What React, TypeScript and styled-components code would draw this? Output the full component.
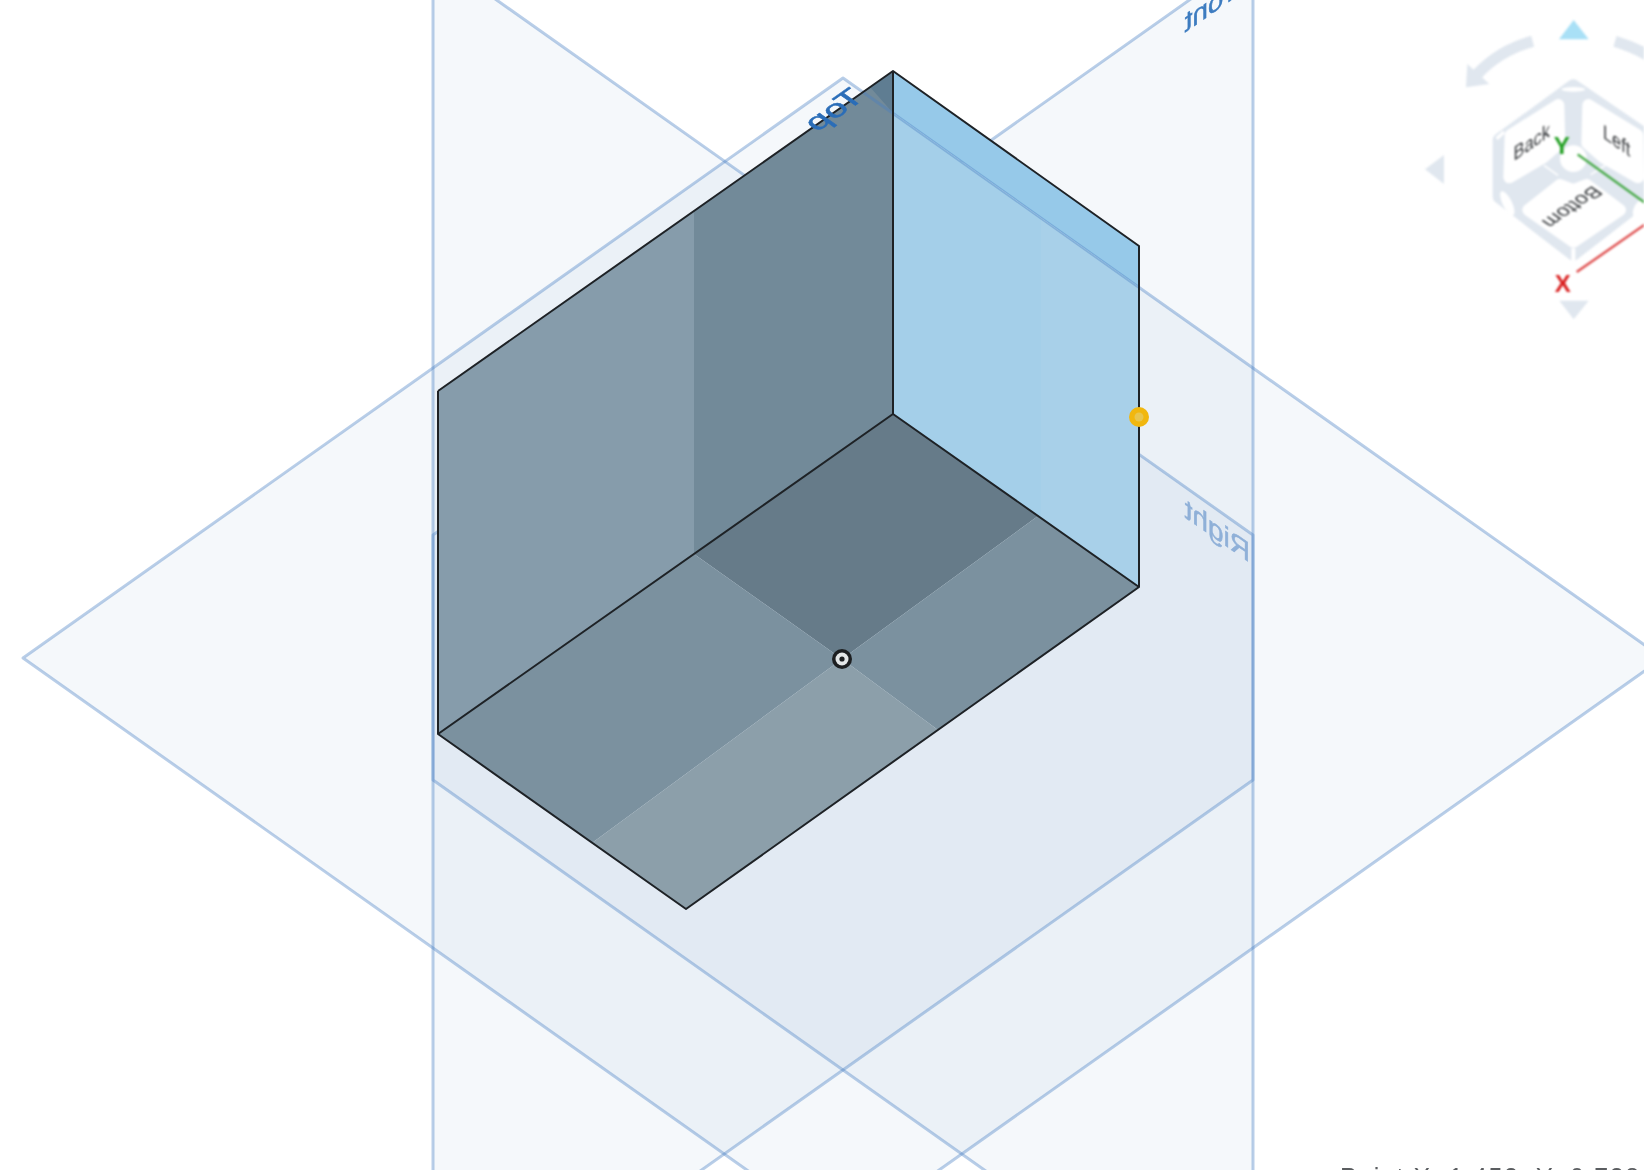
import React from 'react'
import styled, { createGlobalStyle } from 'styled-components'

const PLANE_LINE = 'rgba(70, 125, 195, 0.38)'
const PLANE_FILL = 'rgba(95, 140, 185, 0.062)'

const planeFront = '433,535 1253,-45 1253,780 433,1360'
const planeRight = '433,-45 1253,535 1253,1360 433,780'
const planeTop = '23,658 843,78 1663,658 843,1238'

// box faces, each split where the datum planes cut through it
const faces = [
  { points: '438,391 694,211 694,554 438,734', fill: '#869cab' },
  { points: '694,211 893,71 893,414 694,554', fill: '#728a99' },
  { points: '870,87 893,71 893,113', fill: '#5f7d92' },
  { points: '893,71 1139,246 1139,287 893,113', fill: '#96c9e9' },
  { points: '893,113 1041,218 1041,518 893,414', fill: '#a4cfe9' },
  { points: '1041,218 1139,287 1139,587 1041,518', fill: '#a8d0e9' },
  { points: '694,554 893,414 1038,516 842,659', fill: '#667b89' },
  { points: '438,734 694,554 842,659 592,843', fill: '#7b919f' },
  { points: '1038,516 1139,587 938,730 842,659', fill: '#7b919f' },
  { points: '842,659 938,730 686,909 592,843', fill: '#8c9faa' },
]

const boxEdges = [
  '438,391 893,71 1139,246 1139,587 686,909 438,734 438,391',
  '893,71 893,414',
  '438,734 893,414 1139,587',
]

export default function App() {
  return (
    <>
      <GlobalStyle />
      <Viewport>
        <Scene viewBox="0 0 1644 1170">
          <polygon points={planeFront} fill={PLANE_FILL} />
          <polygon points={planeRight} fill={PLANE_FILL} />
          <polygon points={planeTop} fill={PLANE_FILL} />
          <DatumEdge points={planeFront} />
          <DatumEdge points={planeRight} />

          {faces.map((face) => (
            <polygon key={face.points} points={face.points} fill={face.fill} />
          ))}
          <DatumEdge points={planeTop} />

          {boxEdges.map((edge) => (
            <BoxEdge key={edge} points={edge} />
          ))}

          <PlaneLabel transform="matrix(-1.08 0.76 0.85 0.6 866 98)" $tone="#2a6db8">
            Top
          </PlaneLabel>
          <PlaneLabel transform="matrix(-1 0.7 0 1 1250 -13)" $tone="#3d7cc0">
            Front
          </PlaneLabel>
          <PlaneLabel transform="matrix(-1 -0.7 0 1 1250 563)" $tone="#8fb0d8">
            Right
          </PlaneLabel>

          <circle cx={1139} cy={417} r={10} fill="#f1b70f" />
          <circle cx={1139} cy={417} r={4.5} fill="#e8c64f" />

          <circle cx={842} cy={659} r={10} fill="#1d1f21" />
          <circle cx={842} cy={659} r={6.5} fill="#e4e7e8" />
          <circle cx={842} cy={659} r={2.6} fill="#1d1f21" />
        </Scene>

        <ViewCube viewBox="0 0 732 990">
          <polygon points="521,60 566,118 477,118" fill="#a9e0f6" />
          <polygon points="75,508 132,465 132,552" fill="#e0e7ef" />
          <polygon points="478,902 566,902 521,958" fill="#e0e7ef" />
          <CubeArc d="M398 124 Q300 150 232 222" />
          <polygon points="202,192 198,262 268,252" fill="#e0e7ef" />
          <CubeArc d="M645 124 Q720 146 780 190" />

          <path
            d="M520 258 L742 410 L742 590 L520 762 L298 590 L298 420 Z"
            fill="#e0e7ef"
            stroke="#e0e7ef"
            strokeWidth={40}
            strokeLinejoin="round"
          />
          <CubeFace points="475,315 332,405 328,532 430,472 478,430" />
          <CubeFace points="565,315 712,405 714,532 610,472 562,430" />
          <CubeFace points="385,630 480,555 520,570 560,555 660,630 520,725" />
          <circle cx={520} cy={476} r={40} fill="#fff" />
          <ellipse cx={520} cy={268} rx={36} ry={7} fill="#fff" />
          <ellipse cx={322} cy={610} rx={14} ry={40} fill="#fff" transform="rotate(-26 322 610)" />
          <ellipse cx={716} cy={626} rx={14} ry={28} fill="#fff" transform="rotate(26 716 626)" />
          <line x1={432} y1={496} x2={474} y2={526} stroke="#fff" strokeWidth={5} />
          <line x1={572} y1={524} x2={616} y2={496} stroke="#fff" strokeWidth={5} />
          <line x1={520} y1={745} x2={520} y2={785} stroke="#fff" strokeWidth={12} />
          <line x1={290} y1={416} x2={312} y2={396} stroke="#fff" strokeWidth={10} />

          <CubeLabel transform="matrix(0.82 -0.57 0 1 395 446)">Back</CubeLabel>
          <CubeLabel transform="matrix(0.82 0.57 0 1 650 442)">Left</CubeLabel>
          <CubeLabel transform="matrix(-0.82 0.57 -0.82 -0.57 500 610)">Bottom</CubeLabel>

          <line x1={533} y1={463} x2={740} y2={612} stroke="#3fa63f" strokeWidth={7} />
          <line x1={530} y1={816} x2={740} y2={670} stroke="#de4a4a" strokeWidth={7} />
          <AxisLabel x={485} y={462} fill="#23a023">Y</AxisLabel>
          <AxisLabel x={488} y={877} fill="#d92020">X</AxisLabel>
        </ViewCube>

        <PointReadout>Point X: 1.452, Y: 0.738</PointReadout>
      </Viewport>
    </>
  )
}

const GlobalStyle = createGlobalStyle`
  html, body {
    margin: 0;
    height: 100%;
    overflow: hidden;
    background: #fff;
  }
`

const Viewport = styled.div`
  position: relative;
  width: 1644px;
  height: 1170px;
  overflow: hidden;
  background: #fff;
  font-family: 'Liberation Sans', Arial, sans-serif;
`

const Scene = styled.svg`
  display: block;
  width: 1644px;
  height: 1170px;
  filter: blur(0.7px);
`

const DatumEdge = styled.polygon`
  fill: none;
  stroke: ${PLANE_LINE};
  stroke-width: 3px;
  stroke-linejoin: round;
`

const BoxEdge = styled.polyline`
  fill: none;
  stroke: #1e2226;
  stroke-width: 2px;
  stroke-linejoin: round;
`

const ViewCube = styled.svg`
  position: absolute;
  top: 0;
  right: 0;
  width: 244px;
  height: 330px;
  filter: blur(0.9px);
`

const CubeArc = styled.path`
  fill: none;
  stroke: #e0e7ef;
  stroke-width: 34px;
`

const CubeFace = styled.polygon`
  fill: #fff;
  stroke: #fff;
  stroke-width: 36px;
  stroke-linejoin: round;
`

const PlaneLabel = styled.text<{ $tone: string }>`
  font-family: 'Liberation Sans', Arial, sans-serif;
  font-size: 28px;
  fill: ${(p) => p.$tone};
  stroke: ${(p) => p.$tone};
  stroke-width: 0.5px;
`

const CubeLabel = styled.text`
  font-family: 'Liberation Sans', Arial, sans-serif;
  font-size: 60px;
  text-anchor: middle;
  fill: #35383b;
`

const AxisLabel = styled.text`
  font-family: 'Liberation Sans', Arial, sans-serif;
  font-size: 72px;
  font-weight: 700;
  text-anchor: middle;
`

const PointReadout = styled.div`
  position: absolute;
  left: 1340px;
  top: 1163px;
  font-size: 25px;
  line-height: 28px;
  letter-spacing: 1.6px;
  white-space: nowrap;
  color: #5a5d60;
  filter: blur(0.6px);
`
